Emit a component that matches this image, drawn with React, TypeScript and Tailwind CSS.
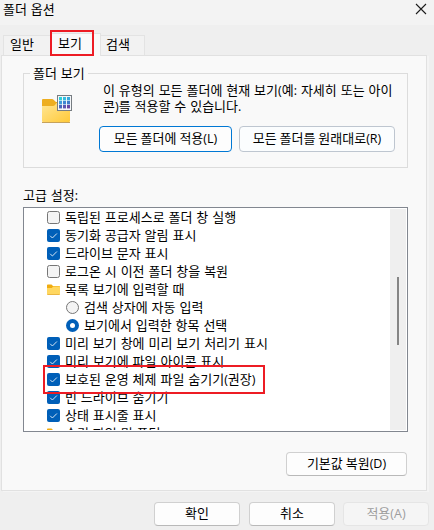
import type { ReactNode } from 'react';

// Latin letters and punctuation are set in a narrower face than the Hangul around them.
function T({ children }: { children: string }) {
  const parts = children.split(/([A-Z():.]+)/);
  return (
    <span className="whitespace-pre">
      {parts.map((p, i) =>
        i % 2 ? (
          <span key={i} className="font-['Open_Sans','Noto_Sans_CJK_KR',sans-serif] text-[12.5px]">
            {p}
          </span>
        ) : (
          p
        ),
      )}
    </span>
  );
}

function Button({ children, className }: { children: string; className: string }) {
  return (
    <button
      className={`flex shrink-0 items-center justify-center rounded-[4px] border leading-[16px] ${className}`}
    >
      <T>{children}</T>
    </button>
  );
}

function Check({ on }: { on: boolean }) {
  return (
    <svg width="13" height="13" viewBox="0 0 13 13" className="shrink-0">
      {on ? (
        <>
          <rect width="13" height="13" rx="2" fill="#005fb8" />
          <path d="M3.2 6.8 5.4 9 9.9 4.5" fill="none" stroke="#d5e5f3" strokeWidth="1" />
        </>
      ) : (
        <rect x=".5" y=".5" width="12" height="12" rx="2" fill="#f4f4f4" stroke="#767676" />
      )}
    </svg>
  );
}

function Radio({ on }: { on: boolean }) {
  return (
    <svg width="13" height="13" viewBox="0 0 13 13" className="shrink-0">
      {on ? (
        <>
          <circle cx="6.5" cy="6.5" r="6.5" fill="#005fb8" />
          <circle cx="6.5" cy="6.5" r="2.5" fill="#fff" />
        </>
      ) : (
        <circle cx="6.5" cy="6.5" r="6" fill="#f4f4f4" stroke="#767676" />
      )}
    </svg>
  );
}

function SmallFolder() {
  return (
    <svg width="13" height="13" viewBox="0 0 13 13" className="shrink-0">
      <path d="M0 2.3q0-.8.8-.8h3.7L6 3h6.2q.8 0 .8.8V6H0z" fill="#f0ac10" />
      <path d="M0 5h4.8L6.3 3.5H13v7.7q0 .8-.8.8H.8q-.8 0-.8-.8z" fill="#ffd760" />
      <path d="M.5 11.5h12" stroke="#eab743" />
    </svg>
  );
}

function FolderViewIcon() {
  const colors = ['#2fd0d8', '#34bde0', '#36a9dc', '#3d9ddc', '#3d88d2', '#3f7dca', '#4a68bd', '#5c58b1', '#6847a5'];
  return (
    <svg width="30" height="28" viewBox="0 0 30 28">
      <path d="M0 5q0-1 1-1h9q1 0 1.6.8L14 7h13q1 0 1 1v5H0z" fill="#edae20" />
      <path d="M0 11h11q1.2 0 2-1l1.5-2H27q1 0 1 1v17q0 1-1 1H1q-1 0-1-1z" fill="url(#folderFace)" />
      <path d="M0 27.5h28" stroke="#c6a25b" />
      <rect x="15.5" y=".5" width="14" height="15" fill="#f5f7f9" stroke="#777d82" />
      {colors.map((c, i) => (
        <rect key={i} x={17 + (i % 3) * 4} y={2 + Math.floor(i / 3) * 4} width="3" height="3.4" fill={c} />
      ))}
      <defs>
        <linearGradient id="folderFace" x1="0" y1="0" x2="1" y2="1">
          <stop offset="0" stopColor="#ffe695" />
          <stop offset="1" stopColor="#ffc938" />
        </linearGradient>
      </defs>
    </svg>
  );
}

const rows: { icon: ReactNode; text: string; nested?: boolean }[] = [
  { icon: <Check on={false} />, text: '독립된 프로세스로 폴더 창 실행' },
  { icon: <Check on />, text: '동기화 공급자 알림 표시' },
  { icon: <Check on />, text: '드라이브 문자 표시' },
  { icon: <Check on={false} />, text: '로그온 시 이전 폴더 창을 복원' },
  { icon: <SmallFolder />, text: '목록 보기에 입력할 때' },
  { icon: <Radio on={false} />, text: '검색 상자에 자동 입력', nested: true },
  { icon: <Radio on />, text: '보기에서 입력한 항목 선택', nested: true },
  { icon: <Check on />, text: '미리 보기 창에 미리 보기 처리기 표시' },
  { icon: <Check on />, text: '미리 보기에 파일 아이콘 표시' },
  { icon: <Check on />, text: '보호된 운영 체제 파일 숨기기(권장)' },
  { icon: <Check on />, text: '빈 드라이브 숨기기' },
  { icon: <Check on />, text: '상태 표시줄 표시' },
  { icon: <SmallFolder />, text: '숨김 파일 및 폴더' },
];

export default function App() {
  return (
    <div className="flex h-[530px] w-[434px] flex-col overflow-hidden bg-[#efefef] font-['Noto_Sans_CJK_KR',sans-serif] text-[13px] leading-[16px] text-black [word-spacing:1px]">
      <header className="flex h-[25px] shrink-0 items-start justify-between bg-[#f3f3f3] pt-[1px] pr-[7px] pl-[3px]">
        <T>폴더 옵션</T>
        <svg width="12" height="12" viewBox="0 0 12 12" className="mt-[2px]">
          <path d="M1 1l10 10M11 1L1 11" stroke="#1c1c1c" strokeWidth="1.1" fill="none" />
        </svg>
      </header>

      <nav className="flex h-[30px] shrink-0 items-end pl-[3px]">
        <div className="h-[20px] w-[47px] border border-r-0 border-b-0 border-[#e3e3e3] bg-[#f2f2f2] pl-[6px]">
          <T>일반</T>
        </div>
        <div className="relative z-10 -mb-px h-[23px] w-[51px] border border-b-0 border-[#e3e3e3] bg-[#f9f9f9] pt-px pl-[7px]">
          <T>보기</T>
          <div className="absolute top-[-4px] left-[-1px] h-[26px] w-[44px] border-2 border-[#ed1c24]" />
        </div>
        <div className="h-[20px] w-[44px] border border-b-0 border-l-0 border-[#e3e3e3] bg-[#f2f2f2] pl-[5px]">
          <T>검색</T>
        </div>
      </nav>

      <main className="ml-px flex h-[436px] w-[426px] shrink-0 flex-col border border-[#e1e1e1] bg-[#f9f9f9] pl-[21px] shadow-[2px_1px_0_#f4f4f4]">
        <section className="relative mt-[17px] flex h-[95px] w-[385px] border border-[#dcdcdc]">
          <div className="absolute top-[-9px] left-[6px] bg-[#f9f9f9] px-[3px]">
            <T>폴더 보기</T>
          </div>
          <div className="w-[75px] shrink-0 pt-[21px] pl-[18px]">
            <FolderViewIcon />
          </div>
          <div className="pt-[8px]">
            <p className="flex flex-col pl-[4px] leading-[15px]">
              <T>이 유형의 모든 폴더에 현재 보기(예: 자세히 또는 아이</T>
              <T>콘)를 적용할 수 있습니다.</T>
            </p>
            <div className="mt-[12px] flex gap-[7px]">
              <Button className="h-[26px] w-[133px] border-[#0078d4] bg-[#fdfdfd] pb-[2px]">모든 폴더에 적용(L)</Button>
              <Button className="h-[26px] w-[156px] border-[#bec6d0] bg-[#fbfdfe] pb-[2px]">모든 폴더를 원래대로(R)</Button>
            </div>
          </div>
        </section>

        <div className="mt-[19px] h-[20px]">
          <T>고급 설정:</T>
        </div>

        <section className="relative flex h-[225px] w-[385px] shrink-0 justify-between border border-[#828790] bg-white p-px">
          <ul className="-mt-px h-[222px] flex-1 overflow-hidden pl-[22px]">
            {rows.map((r) => (
              <li key={r.text} className={`flex h-[18px] items-center gap-[5px] ${r.nested ? 'pl-[19px]' : ''}`}>
                {r.icon}
                <T>{r.text}</T>
              </li>
            ))}
          </ul>
          <div className="flex w-[16px] shrink-0 justify-center bg-[#efefef] pt-[68px]">
            <div className="h-[68px] w-[2px] bg-[#858585]" />
          </div>
          <div className="absolute top-[157px] left-[19px] h-[29px] w-[222px] border-2 border-[#ed1c24]" />
        </section>

        <div className="mt-[20px] flex w-[384px] justify-end">
          <Button className="h-[24px] w-[121px] border-[#d0d0d0] border-b-[#b9b9b9] bg-[#fdfdfd] pb-[2px]">기본값 복원(D)</Button>
        </div>
      </main>

      <footer className="flex justify-end gap-[8px] pt-[11px] pr-[5px]">
        <Button className="mr-px h-[24px] w-[86px] border-[#d0d0d0] border-b-[#b9b9b9] bg-[#fdfdfd] pb-[2px]">확인</Button>
        <Button className="h-[24px] w-[86px] border-[#d0d0d0] border-b-[#b9b9b9] bg-[#fdfdfd] pb-[2px]">취소</Button>
        <Button className="h-[24px] w-[86px] border-[#e5e5e5] bg-[#f5f5f5] pb-[2px] text-[#9d9d9d]">적용(A)</Button>
      </footer>
    </div>
  );
}
